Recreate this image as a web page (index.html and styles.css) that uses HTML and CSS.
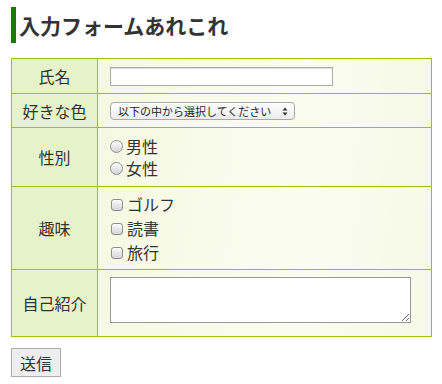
FILE: index.html
```html
<!DOCTYPE html>
<html>

	<head>
		<meta charset="UTF-8">
		<title>入力フォームあれこれ</title>
		<link rel="stylesheet" href="styles.css">
	</head>

	<body>
		<div class="wrap">
			<h2 class="title">入力フォームあれこれ</h2>
			<form action="#">
				<table class="form_table">
					<tr>
						<th>氏名</th>
						<td><input class="txt" type="text" name="name"></td>
					</tr>
					<tr>
						<th>好きな色</th>
						<td>
							<div class="sel_wrap">
								<select name="color">
									<option>以下の中から選択してください</option>
									<option>赤</option>
									<option>青</option>
									<option>緑</option>
								</select>
								<svg class="sel_arrow" width="6" height="9" viewBox="0 0 6 9"><path d="M3 0.5L5.5 3.5H0.5Z M3 8.5L5.5 5.5H0.5Z" fill="#333"/></svg>
							</div>
						</td>
					</tr>
					<tr>
						<th>性別</th>
						<td class="radios">
							<label><input type="radio" name="sex">男性</label>
							<label><input type="radio" name="sex">女性</label>
						</td>
					</tr>
					<tr>
						<th>趣味</th>
						<td class="checks">
							<label><input type="checkbox" name="hobby">ゴルフ</label>
							<label><input type="checkbox" name="hobby">読書</label>
							<label><input type="checkbox" name="hobby">旅行</label>
						</td>
					</tr>
					<tr>
						<th>自己紹介</th>
						<td class="area_cell"><textarea name="intro"></textarea></td>
					</tr>
				</table>
				<button class="submit" type="submit">送信</button>
			</form>
		</div>
	</body>

</html>
```

FILE: styles.css
```css
* {margin: 0;padding: 0;box-sizing: border-box;}
body { font-family: "Noto Sans CJK JP", "Noto Sans", sans-serif; color:#333; background:#fff; }
.wrap { padding:7px 11px; }

.title { border-left:5px solid #1a7a00; padding-left:3px; font-size:21px; line-height:36px; font-weight:bold; color:#333; margin-bottom:15px; }

.form_table { width:421px; border-collapse:collapse; font-size:16px; }
.form_table th, .form_table td { border:1px solid #99c400; }
.form_table th { width:86px; background:#e6f3ca; font-weight:normal; text-align:center; vertical-align:middle; line-height:20px; }
.form_table td { background:linear-gradient(100deg, #f5f9e2, #fafcef 60%, #f6f9e6); padding:8px 12px 7px; vertical-align:top; line-height:18px; }

.txt { display:block; width:223px; height:19px; border:1px solid #aaa; background:#fff; box-shadow:inset 0 1px 1px #ddd; }

.sel_wrap { position:relative; width:185px; }
.sel_wrap select { appearance:none; -webkit-appearance:none; display:block; width:185px; height:18px; border:1px solid #a8a8a8; border-radius:4px; background:linear-gradient(#fff, #ececec); font-family:inherit; font-size:11px; color:#222; padding:0 0 0 7px; line-height:16px; }
.sel_arrow { position:absolute; right:7px; top:5px; }

.form_table td.radios { padding:7px 12px; }
.radios label { display:flex; align-items:center; height:22px; line-height:22px; }
.form_table td.checks { padding:5px 12px; }
.checks label { display:flex; align-items:center; height:24px; line-height:24px; }

.radios input { appearance:none; -webkit-appearance:none; width:13px; height:13px; margin:1px 3px 0 0; border:1px solid #8e8e8e; border-radius:50%; background:linear-gradient(#fdfdfd, #d4d4d4); box-shadow:inset 0 1px 1px #fff; }
.checks input { appearance:none; -webkit-appearance:none; width:12px; height:12px; margin:1px 4px 0 1px; border:1px solid #8e8e8e; border-radius:3px; background:linear-gradient(#fdfdfd, #d4d4d4); }

.form_table td.area_cell { padding:7px 12px 13px; }
.area_cell textarea { display:block; width:301px; height:46px; border:1px solid #999; background:#fff; resize:both; font-family:inherit; }

.submit { display:block; margin-top:11px; width:50px; height:29px; border:1px solid #aaa; background:#eee; font-family:inherit; font-size:16px; color:#333; }
```
